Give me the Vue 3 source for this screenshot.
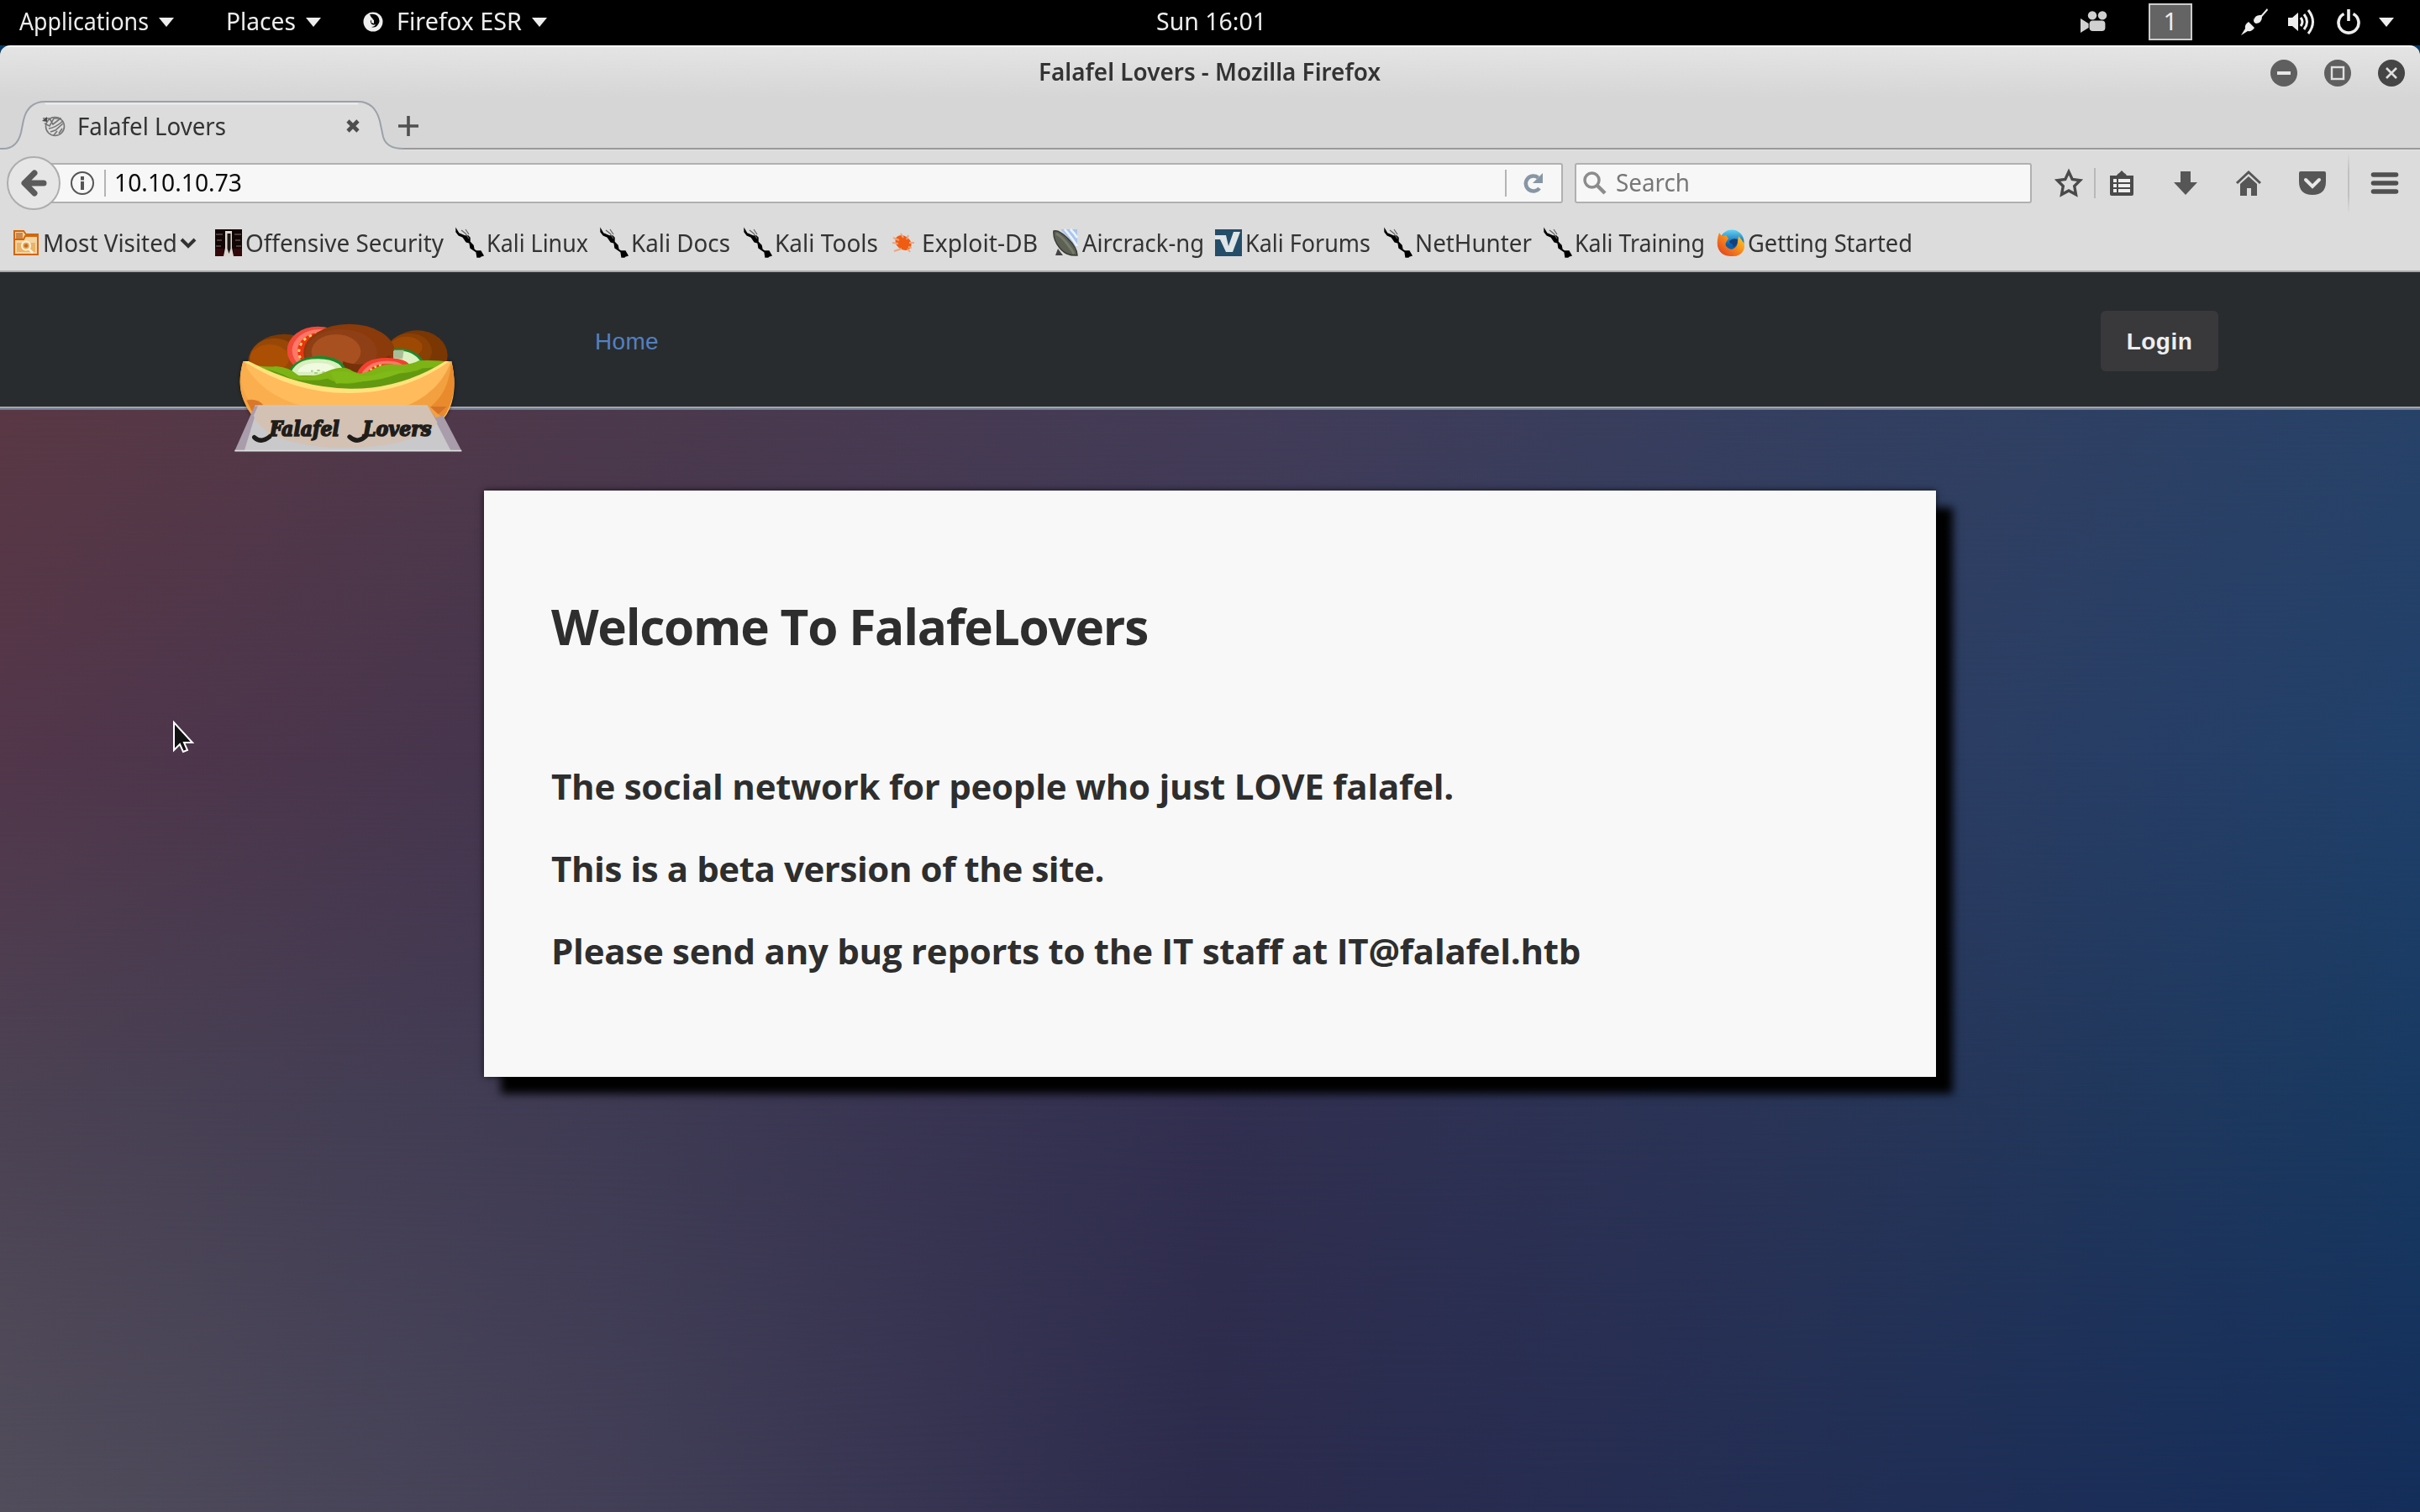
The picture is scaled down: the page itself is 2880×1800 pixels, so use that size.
<script setup>
// Spreads a label's letters so that the label takes the given width
const vFit = {
  mounted(el, { value }) {
    const natural = el.getBoundingClientRect().width
    el.style.letterSpacing = `${(value - natural) / el.textContent.length}px`
  },
}
// Condenses a label's glyphs so that the label takes the given width
const vNarrow = {
  mounted(el, { value }) {
    const natural = el.getBoundingClientRect().width
    el.style.transform = `scaleX(${value / natural})`
    el.style.marginRight = `${value - natural}px`
  },
}

const bookmarks = [
  { label: 'Most Visited', icon: 'folder', width: 240, text: 160, menu: true },
  { label: 'Offensive Security', icon: 'offsec', width: 287, text: 236 },
  { label: 'Kali Linux', icon: 'kali', width: 172, text: 121 },
  { label: 'Kali Docs', icon: 'kali', width: 171, text: 118 },
  { label: 'Kali Tools', icon: 'kali', width: 175, text: 123 },
  { label: 'Exploit-DB', icon: 'exploit', width: 191, text: 138 },
  { label: 'Aircrack-ng', icon: 'dish', width: 194, text: 145 },
  { label: 'Kali Forums', icon: 'forum', width: 202, text: 149 },
  { label: 'NetHunter', icon: 'kali', width: 190, text: 139 },
  { label: 'Kali Training', icon: 'kali', width: 206, text: 155 },
  { label: 'Getting Started', icon: 'firefox', width: 240, text: 196 },
]
</script>

<template>
  <div class="screen">
    <header class="topbar">
      <div class="menus">
        <span v-narrow="154" class="m1">Applications</span><i class="caret"></i>
        <span v-narrow="83" class="m2">Places</span><i class="caret"></i>
        <svg class="mini-fox" viewBox="0 0 24 24" width="24" height="24"><circle cx="12" cy="12" r="11.5" fill="#eee"/><path d="M8 3q7-1 10 3q3 5 0 9q-3 5-8 3q4 0 5-3q-5 2-6-3q0-3 3-3q-3-3-4-6z" fill="#000"/><path d="M10 8l3 2v4l-3-1z" fill="#eee"/></svg>
        <span v-narrow="149" class="m3">Firefox ESR</span><i class="caret"></i>
      </div>
      <span v-narrow="131" class="clock">Sun 16:01</span>
      <div class="tray">
        <svg class="cam" viewBox="0 0 16 13" width="32" height="26"><g fill="#d0d0d0"><circle cx="7" cy="2.7" r="2.6"/><circle cx="13" cy="2.7" r="2.6"/><rect x="5.3" y="5.8" width="9.4" height="6.2" rx="2"/><path d="M0 4.500l4.800 3v2.500L0 13z"/></g></svg>
        <span class="workspace">1</span>
        <svg class="plug" viewBox="0 0 32 32" width="32" height="32"><g fill="#eee"><path d="M0 32l5-8q-1-5 4-8l7 7q-3 5-8 4zM15 14q2-7 9-6l7-8l1 2l-7 8q0 7-7 8q-4-1-3-8z"/></g></svg>
        <svg class="vol" viewBox="0 0 32 32" width="32" height="32"><path d="M0 11h5l7-6v22l-7-6H0z" fill="#eee"/><path d="M15 11q4 5 0 10M19 7q7 9 0 18M24 2q11 14 0 28" fill="none" stroke="#eee" stroke-width="3"/></svg>
        <svg class="power" viewBox="0 0 28 30" width="28" height="30"><path d="M8.500 5.500A12 12 0 1 0 19.500 5.500M14 0v14" fill="none" stroke="#eee" stroke-width="3.600"/></svg>
        <i class="caret"></i>
      </div>
    </header>

    <div class="window">
      <div class="titlebar">
        <strong v-narrow="407">Falafel Lovers - Mozilla Firefox</strong>
        <div class="controls">
          <svg viewBox="0 0 32 32" width="32" height="32"><circle cx="16" cy="16" r="16" fill="#5f5f5f"/><path d="M8 16h16" stroke="#e6e6e6" stroke-width="4"/></svg>
          <svg viewBox="0 0 32 32" width="32" height="32"><circle cx="16" cy="16" r="16" fill="#5f5f5f"/><rect x="9" y="9" width="14" height="14" fill="none" stroke="#e0e0e0" stroke-width="2.400"/></svg>
          <svg viewBox="0 0 32 32" width="32" height="32"><circle cx="16" cy="16" r="16" fill="#454545"/><path d="M10 10l12 12M22 10L10 22" stroke="#e0e0e0" stroke-width="2.600"/></svg>
        </div>
      </div>

      <div class="tabstrip">
        <div class="tab">
          <svg class="tab-shape" viewBox="0 0 480 62" width="480" height="62"><path d="M0 62V57H4Q20 57 25 38L28 23Q33 1 54 1H426Q446 1 452 24L456 43Q460 57 480 57V62z" fill="#dcdcdc"/><path d="M54 3.500H426" stroke="#ededed" stroke-width="2"/><path d="M0 57H4Q20 57 25 38L28 23Q33 1 54 1H426Q446 1 452 24L456 43Q460 57 480 57" fill="none" stroke="#9aa2a9" stroke-width="2"/></svg>
          <div class="tab-content">
            <svg viewBox="0 0 28 28" width="28" height="28"><g fill="none" stroke="#747474" stroke-width="1.600"><circle cx="15.500" cy="14.500" r="11"/><path d="M1 5l8 0l4 7l9-7M3 11l6 3l5-9h9M8 17q8-1 17-9M10 21l6-2 9-8M14 25l4-5M20 23l4-6"/></g><path d="M0 8l6-5v6z" fill="#4c4c4c"/></svg>
            <span v-narrow="177" class="tab-title">Falafel Lovers</span>
            <svg class="close" viewBox="0 0 16 16" width="16" height="16"><path d="M2 2l12 12M14 2L2 14" stroke="#4d4d4d" stroke-width="4.600"/></svg>
          </div>
        </div>
        <svg class="plus" viewBox="0 0 24 24" width="24" height="24"><path d="M12 0v24M0 12h24" stroke="#505050" stroke-width="3.600"/></svg>
      </div>

      <div class="navbar">
        <svg class="back" viewBox="0 0 64 64" width="64" height="64"><circle cx="32" cy="32" r="31" fill="#e6e6e6" stroke="#adadad" stroke-width="2"/><path d="M44 32H22M33 20L21 32L33 44" fill="none" stroke="#5b5b5b" stroke-width="7" stroke-linecap="round" stroke-linejoin="round"/></svg>
        <div class="url">
          <svg class="info" viewBox="0 0 28 28" width="28" height="28"><circle cx="14" cy="14" r="13" fill="none" stroke="#555" stroke-width="2"/><path d="M14 6v4.500M14 12v10" stroke="#555" stroke-width="4"/></svg>
          <i class="rule"></i>
          <span v-narrow="152" class="address">10.10.10.73</span>
          <i class="rule right"></i>
          <svg class="reload" viewBox="0 0 24 24" width="24" height="24"><path d="M19 18A9 9 0 1 1 17.500 5.500" fill="none" stroke="#8796a4" stroke-width="4.500"/><path d="M23 0v12H11z" fill="#8796a4"/></svg>
        </div>
        <div class="search">
          <svg viewBox="0 0 28 28" width="28" height="28"><circle cx="10.500" cy="10.500" r="8.500" fill="none" stroke="#8c8c8c" stroke-width="3.500"/><path d="M16.500 16.500l9.500 9.500" stroke="#8c8c8c" stroke-width="4.500"/></svg>
          <span v-narrow="88">Search</span>
        </div>
        <div class="tools">
          <svg class="t-star" viewBox="0 0 32 32" width="32" height="32"><path d="M16 2.500l4.200 9 9.300 1.200-6.800 6.800 1.800 10L16 25l-8.500 4.500 1.800-10L2.500 12.700l9.300-1.200z" fill="none" stroke="#4a4a4a" stroke-width="3.400"/></svg>
          <i class="tool-rule"></i>
          <svg class="t-clip" viewBox="0 0 28 30" width="28" height="30"><path d="M0 6h8q1-2 3-3l3-3 3 3q2 1 3 3h8v22q0 2-2 2H2q-2 0-2-2z" fill="#4a4a4a"/><g fill="#efefef"><path d="M4 10h4v4H4zM10 10h14v4H10zM4 16h4v4H4zM10 16h14v4H10zM4 22h4v4H4zM10 22h14v4H10z"/></g></svg>
          <svg class="t-down" viewBox="0 0 28 28" width="28" height="28"><path d="M8 0h12v13h8L14 28L0 13h8z" fill="#565656"/></svg>
          <svg class="t-home" viewBox="0 0 32 30" width="32" height="30"><path d="M2 15L16 2l14 13" fill="none" stroke="#565656" stroke-width="3"/><path d="M6 16L16 7l10 9v14h-7v-9h-5v9H6z" fill="#565656"/></svg>
          <svg class="t-pocket" viewBox="0 0 32 28" width="32" height="28"><path d="M2 0h28q2 0 2 2v10q0 16-16 16T0 12V2q0-2 2-2z" fill="#565656"/><path d="M8 10l8 8 8-8" fill="none" stroke="#e8e8e8" stroke-width="4" stroke-linecap="round"/></svg>
          <i class="fade-rule"></i>
          <svg class="t-menu" viewBox="0 0 32 28" width="32" height="28"><path d="M2.500 4h27M2.500 14h27M2.500 24h27" stroke="#505050" stroke-width="5.600" stroke-linecap="round"/></svg>
        </div>
      </div>

      <nav class="bookmarks">
        <div v-for="b in bookmarks" :key="b.label" class="bookmark" :style="{ width: b.width + 'px' }">
          <svg v-if="b.icon === 'folder'" class="ico folder" viewBox="0 0 30 30" width="30" height="30"><path d="M1 29V1h11l3 4h14v24z" fill="#f3d4a2" stroke="#d2660a" stroke-width="2"/><path d="M3 3h8v7H3z" fill="#cc8748"/><path d="M1 11h11l2-4h15" fill="none" stroke="#d2660a" stroke-width="2"/><path d="M4 15h22v11H4z" fill="#eab468"/><circle cx="15" cy="18.500" r="5" fill="#e9ab62" stroke="#fff3dc" stroke-width="2"/><circle cx="15" cy="18.500" r="2.200" fill="#c66a1c"/><path d="M18 22l5 5" stroke="#fff3dc" stroke-width="2.500"/></svg>
          <svg v-else-if="b.icon === 'offsec'" class="ico" viewBox="0 0 32 32" width="32" height="32"><rect width="32" height="32" fill="#120506"/><path d="M1 5h8v2H1zM23 5h8v2h-8zM2 12h6v2H2zM24 12h6v2h-6zM1 19h6v2H1zM25 19h6v2h-6z" fill="#4a3b3c"/><path d="M0 23h10v9H0zM22 23h10v9H22z" fill="#34080a"/><path d="M12 2h8v20l2 10H10l2-10z" fill="#ded7cf"/><path d="M14.500 5h4v18l-2 6-2-6z" fill="#1a1716"/></svg>
          <svg v-else-if="b.icon === 'kali'" class="ico" viewBox="0 0 32 32" width="32" height="32"><path d="M0 0l3 5 7 3h4l2 2v5l4 4 1 5 3 2h5l3 5-3 1-1 1h-3l-1-6-7-5-1-6-4-1-4-6-5-2-3-4z" fill="#000" stroke="#000" stroke-width="1.400"/><path d="M6 1l5 4 4 6M11 0l4 6" fill="none" stroke="#666" stroke-width="1.200"/></svg>
          <svg v-else-if="b.icon === 'exploit'" class="ico exploit" viewBox="0 0 32 32" width="32" height="32"><ellipse cx="16" cy="16" rx="10.500" ry="8" transform="rotate(38 16 16)" fill="#ef5d12"/><path d="M4 10l7 3M3 16l7 1M5 26l9-3M13 5l3 5M22 7l-2 5M29 16l-6 0M26 22l-4-1M24 27l-3-4" stroke="#f0a37c" stroke-width="2"/></svg>
          <svg v-else-if="b.icon === 'dish'" class="ico" viewBox="0 0 32 32" width="32" height="32"><path d="M10 0h20v22z" fill="#a9c5ef"/><path d="M15 0q8 9 15 20M22 0q5 5 8 10" stroke="#eef4fd" stroke-width="2.500" fill="none"/><path d="M2 2Q8 0 19 11T30 31Q17 32 9 22T2 2z" fill="#5d6155" stroke="#393c34" stroke-width="1.500"/><path d="M5 5Q12 9 18 17T26 29" stroke="#777b6b" stroke-width="3" fill="none"/><path d="M7 23l-3 8h9z" fill="#444"/></svg>
          <svg v-else-if="b.icon === 'forum'" class="ico" viewBox="0 0 32 32" width="32" height="32"><rect width="32" height="32" fill="#234d69"/><path d="M0 7h13l3 13L22 3h8L21 27h-8L6 12H0z" fill="#dfe4e6"/></svg>
          <svg v-else class="ico" viewBox="0 0 32 32" width="32" height="32"><defs><linearGradient id="sky" x2="0" y2="1"><stop offset="0" stop-color="#62d4f5"/><stop offset=".6" stop-color="#0b5fa8"/></linearGradient><linearGradient id="fur" x1="0" y1="1" x2="1" y2="0"><stop offset="0" stop-color="#e0351d"/><stop offset=".5" stop-color="#f4841c"/><stop offset="1" stop-color="#ffe228"/></linearGradient></defs><circle cx="17" cy="15" r="14.500" fill="url(#sky)"/><path d="M2 4l3 4 5-1 3 4-2 3q-3 4 0 7 4 4 8 2 5-3 5-8l1-7 4 5q5 6 2 12-4 8-15 7Q3 32 0 20-1 12 2 4z" fill="url(#fur)"/><path d="M14 14q4-4 10-2 0 8-6 9 1-3-1-4-3 0-3-3z" fill="#153f7b"/></svg>
          <span v-narrow="b.text">{{ b.label }}</span>
          <svg v-if="b.menu" class="chev" viewBox="0 0 20 14" width="20" height="14"><path d="M2 3l8 8 8-8" fill="none" stroke="#333" stroke-width="4"/></svg>
        </div>
      </nav>
    </div>

    <main class="page">
      <div class="mesh r1"></div>
      <div class="mesh r2"></div>
      <div class="mesh r3"></div>
      <div class="mesh r4"></div>

      <div class="site-header">
        <a class="home">Home</a>
        <a class="login">Login</a>
      </div>

      <section class="panel">
        <h1 v-fit="710">Welcome To FalafeLovers</h1>
        <h3><span v-fit="1074">The social network for people who just LOVE falafel.</span></h3>
        <h3><span v-fit="658">This is a beta version of the site.</span></h3>
        <h3><span v-fit="1225">Please send any bug reports to the IT staff at IT@falafel.htb</span></h3>
      </section>

      <svg class="logo" viewBox="0 0 990 570" width="330" height="190">
        <defs>
          <clipPath id="filling"><path d="M120 0H860V212Q680 312 500 312T120 212z"/></clipPath>
          <filter id="soft" x="-10%" y="-10%" width="120%" height="130%"><feGaussianBlur stdDeviation="7"/></filter>
        </defs>
        <path d="M118 210Q95 290 120 350Q180 515 490 520Q800 510 855 380Q885 310 862 210z" fill="#000" opacity=".5" filter="url(#soft)"/>
        <g clip-path="url(#filling)">
          <ellipse cx="740" cy="190" rx="108" ry="90" fill="#7a3603"/>
          <ellipse cx="712" cy="175" rx="80" ry="65" fill="#8a3f04"/>
          <ellipse cx="700" cy="160" rx="58" ry="38" fill="#9d4904"/>
          <ellipse cx="265" cy="215" rx="130" ry="102" fill="#7c3905"/>
          <ellipse cx="230" cy="200" rx="88" ry="72" fill="#984706"/>
          <ellipse cx="212" cy="200" rx="70" ry="50" fill="#aa4f04"/>
          <ellipse cx="385" cy="172" rx="110" ry="86" fill="#f14a3a"/>
          <ellipse cx="390" cy="172" rx="97" ry="76" fill="#ff7867"/>
          <ellipse cx="400" cy="172" rx="88" ry="66" fill="#e93415"/>
          <path d="M385 112Q335 120 322 155T330 205" fill="none" stroke="#ffd257" stroke-width="9" stroke-dasharray="10 13"/>
          <ellipse cx="497" cy="180" rx="163" ry="103" fill="#8a3a0b"/>
          <ellipse cx="468" cy="178" rx="128" ry="82" fill="#8f3f15"/>
          <ellipse cx="450" cy="176" rx="88" ry="62" fill="#a85020"/>
          <path d="M475 210Q550 240 640 190L690 260H470z" fill="#75310a"/>
          <path d="M655 165Q735 160 768 218L700 232Q690 205 655 200z" fill="#168c2c"/>
          <path d="M655 173Q725 168 752 212L705 225Q690 210 655 203z" fill="#dcf0c1"/>
          <path d="M657 170h35l-5 32-30-3z" fill="#a9bd96"/>
          <path d="M278 250Q305 194 388 192T490 250z" fill="#168c2c"/>
          <path d="M286 262Q300 200 388 202T482 262z" fill="#d9efbd"/>
          <path d="M312 248Q325 216 385 216T455 250z" fill="#f0fae0"/>
          <path d="M360 245h8M382 243h10M372 252h12M400 250h10" stroke="#aacd88" stroke-width="6"/>
          <path d="M525 252Q550 196 635 198T720 245z" fill="#f4402f"/>
          <path d="M542 252Q570 207 635 209T700 250z" fill="#ff7867"/>
          <path d="M560 252Q580 218 635 220T680 250z" fill="#e93415"/>
          <path d="M572 242Q590 225 620 224" fill="none" stroke="#ffd257" stroke-width="8" stroke-dasharray="8 10"/>
          <path d="M120 212Q190 235 235 228Q280 230 315 260Q370 270 420 245Q470 225 500 240Q530 262 570 245Q620 215 660 222Q720 225 745 208Q800 205 860 212V330H120z" fill="#7bb414"/>
          <path d="M160 232Q230 240 290 272Q360 285 420 272Q470 300 530 285Q600 275 640 255Q720 255 760 235Q810 235 860 215V330H120z" fill="#629911"/>
          <path d="M430 250Q470 240 520 255Q550 270 600 255Q650 240 700 243Q640 270 590 277T450 290z" fill="#80ba18"/>
        </g>
        <path d="M118 210Q95 290 120 350Q180 515 490 520Q800 510 855 380Q885 310 862 210L845 212Q690 312 500 315T138 212z" fill="#ffbb5c"/>
        <path d="M118 210Q95 290 120 350Q135 385 165 420Q115 310 130 225z" fill="#f4a544"/>
        <path d="M118 212Q180 330 330 370H170Q105 340 112 245z" fill="#faae4e"/>
        <path d="M860 212Q820 320 700 370L820 420Q890 330 862 210z" fill="#f3a140"/>
        <path d="M860 225Q850 320 790 370L830 415Q890 330 864 225z" fill="#e98b2d"/>
        <path d="M130 350Q165 340 190 366L150 390z" fill="#d9772a"/>
        <path d="M785 372H845L815 400z" fill="#d5722a"/>
        <path d="M120 210H138Q320 306 500 308T840 210H855Q700 322 500 324T120 210z" fill="#ffe27b"/>
        <path d="M160 368L88 530H898L832 404L805 412L775 368z" fill="#a99cab"/>
        <path d="M172 368L122 530H860L776 368z" fill="#c9c8ca"/>
        <path d="M172 368L155 405Q200 505 440 519Q720 525 812 430L776 368z" fill="#d3c1b4"/>
        <path d="M88 530H898" stroke="#dcdde0" stroke-width="5"/>
        <path d="M160 369H776" stroke="#cfcac5" stroke-width="3"/>
        <g class="script">
          <path d="M158 482Q182 504 212 480M498 480Q525 506 556 478" fill="none" stroke="#1f1d1a" stroke-width="16" stroke-linecap="round"/>
          <path d="M210 482Q228 462 240 432M554 480Q566 462 570 434" fill="none" stroke="#1f1d1a" stroke-width="7" stroke-linecap="round"/>
          <text x="212" y="478" textLength="250" lengthAdjust="spacingAndGlyphs">Falafel</text>
          <text x="546" y="478" textLength="244" lengthAdjust="spacingAndGlyphs">Lovers</text>
        </g>
      </svg>
    </main>

    <svg class="pointer" viewBox="0 0 24 38" width="24" height="38"><path d="M1 1v33l7-7 4 9 5-2-4-9h10z" fill="#111" stroke="#fff" stroke-width="2"/></svg>
  </div>
</template>

<style>
body { margin: 0; background: #000; overflow: hidden; }
</style>

<style scoped>
.screen { position: relative; width: 2880px; height: 1800px; display: flex; flex-direction: column; overflow: hidden; font: 29.5px/40px "Noto Sans", "Open Sans", sans-serif; color: #333; background: linear-gradient(#000 54px, #083a63 54px); white-space: nowrap; }
svg { display: block; flex: none; overflow: visible; }
span, strong, h1 { flex: none; display: inline-block; transform-origin: 0 50%; }
i { display: block; flex: none; }

.topbar { height: 54px; box-sizing: border-box; padding: 0 0 4px 23px; display: flex; align-items: center; justify-content: space-between; background: #000; color: #eee; }
.menus, .tray { display: flex; align-items: center; }
.menus { width: 1320px; }
.caret { border: 9px solid transparent; border-top: 11px solid #eee; border-bottom: 0; margin-top: 3px; }
.menus .caret { margin-left: 12px; }
.m2 { margin-left: 62px; }
.mini-fox { margin: 2px 16px 0 50px; }
.clock { margin-left: 10px; }
.tray { width: 1320px; justify-content: flex-end; padding-right: 31px; }
.tray svg { position: relative; top: 1px; }
.workspace { box-sizing: border-box; width: 52px; height: 44px; border: 2px solid #ccc; background: #646464; text-align: center; margin: 2px 58px 0 49px; line-height: 38px; }
.vol { margin: 0 26px 0 24px; }
.tray .caret { margin-left: 22px; }

.window { height: 270px; display: flex; flex-direction: column; box-sizing: border-box; border-bottom: 2px solid #a8a8a8; border-radius: 12px 12px 0 0; background: linear-gradient(#fff 2px, #e4e4e4 2px, #d6d6d6 62px, #d6d6d6 122px, #eee 122px, #dcdcdc 126px); }
.titlebar { height: 66px; box-sizing: border-box; padding-bottom: 4px; display: flex; align-items: center; justify-content: flex-end; }
.titlebar strong { font-weight: 600; position: relative; left: -1059px; }
.controls { display: flex; gap: 32px; padding-right: 18px; margin-top: 3px; }
.tabstrip { height: 58px; display: flex; background: linear-gradient(#0000 56px, #999 56px); }
.tab { width: 474px; height: 58px; position: relative; }
.tab-shape { position: absolute; left: 0; top: 0; width: 480px; }
.tab-content { position: relative; display: flex; align-items: center; height: 59px; padding-left: 50px; }
.tab-title { margin-left: 14px; }
.close { margin-left: 143px; }
.plus { margin-top: 18px; }

.navbar { height: 80px; display: flex; align-items: center; padding-left: 8px; }
.back { position: relative; z-index: 1; margin-right: -14px; }
.url { box-sizing: border-box; width: 1802px; height: 48px; border: 2px solid #b0b0b0; border-radius: 3px; background: #f7f7f7; display: flex; align-items: center; padding-left: 24px; color: #0b0b0b; }
.rule { width: 2px; height: 32px; background: #b4b4b4; margin-left: 12px; }
.address { margin-left: 10px; }
.rule.right { margin-left: auto; }
.reload { margin: 0 21px 0 20px; }
.search { box-sizing: border-box; width: 544px; height: 48px; margin-left: 14px; border: 2px solid #b0b0b0; border-radius: 3px; background: #f7f7f7; display: flex; align-items: center; padding-left: 8px; color: #777; }
.search span { margin-left: 11px; }
.url span, .search span { line-height: 38px; padding-bottom: 2px; }
.tools { display: flex; align-items: center; }
.t-star { margin-left: 28px; }
.tool-rule { width: 2px; height: 36px; background: #b8b8b8; margin: 0 17px 0 14px; }
.t-down { margin-left: 48px; }
.t-home { margin-left: 45px; }
.t-pocket { margin-left: 44px; }
.fade-rule { width: 2px; height: 72px; margin: 0 26px; background: linear-gradient(#ccc0, #c0c0c0 30%, #c0c0c0 70%, #ccc0); }

.bookmarks { display: flex; height: 61px; align-items: center; padding-left: 16px; }
.bookmark { display: flex; align-items: center; flex: none; }
.ico { margin-right: 4px; }
.folder { margin-right: 5px; }
.exploit { margin-left: -2px; margin-right: 6px; }
.chev { margin-left: 3px; }

.page { position: relative; height: 1476px; overflow: hidden; }
.mesh { position: absolute; inset: 164px 0 0 0; }
.r1 { background: linear-gradient(90deg, #5a3844, #4c394c 25%, #433c57 50%, #343f60 75%, #284268); }
.r2 { background: linear-gradient(90deg, #52364a, #43354e 25%, #3b3656 50%, #2f3c60 75%, #20406a); mask-image: linear-gradient(#0000, #000 31%); }
.r3 { background: linear-gradient(90deg, #4b4253, #3f3b54 25%, #322f50 50%, #293557 75%, #183a62); mask-image: linear-gradient(#0000 31%, #000 62%); }
.r4 { background: linear-gradient(90deg, #514d5b, #423f57 25%, #2c2b4c 50%, #222e54 75%, #142e5a); mask-image: linear-gradient(#0000 62%, #000); }

.site-header { position: relative; height: 160px; box-sizing: content-box; display: flex; justify-content: space-between; align-items: flex-start; padding: 0 240px 0 708px; background: #282c2f; border-bottom: 2px solid #a2a6aa; box-shadow: 0 2px 0 #8a8c9ccc; font-family: "Liberation Sans", Arial, sans-serif; font-size: 28px; }
.home, .login { margin-top: 46px; line-height: 73px; }
.home { color: #5480c0; letter-spacing: .3px; }
.login { width: 140px; height: 72px; border-radius: 6px; background: #39393b; color: #eee; font-weight: 700; text-align: center; letter-spacing: .5px; }
.panel { position: relative; box-sizing: border-box; width: 1728px; height: 698px; margin: 98px 0 0 576px; padding: 128px 80px 0; background: #f8f8f8; box-shadow: 20px 20px 10px #000, 0 0 8px #000a; color: #2e2e2e; font-family: "Open Sans", "Noto Sans", sans-serif; }
h1 { margin: 0 0 109px; font-size: 58.5px; line-height: 67px; height: 66px; font-weight: 700; }
h3 { margin: 0; font-size: 42px; line-height: 98px; height: 98px; font-weight: 700; }
.logo { position: absolute; left: 250px; top: 36px; }
.script text { font: italic 900 74px "DejaVu Serif", "Liberation Serif", serif; fill: #1f1d1a; stroke: #1f1d1a; stroke-width: 5px; }
.pointer { position: absolute; left: 206px; top: 859px; }
</style>
